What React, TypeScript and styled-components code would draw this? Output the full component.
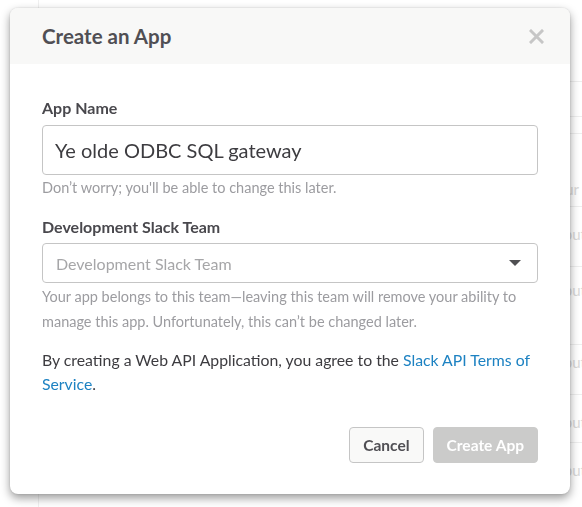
import React from "react";
import styled, { createGlobalStyle } from "styled-components";

const GlobalStyle = createGlobalStyle`
  html, body {
    margin: 0;
    padding: 0;
    background: #ffffff;
    font-family: Lato, "Noto Sans", sans-serif;
    -webkit-font-smoothing: antialiased;
  }
  * { box-sizing: border-box; }
`;

const rows = [
  { height: 82, text: "" },
  { height: 35, text: "" },
  { height: 17, text: "" },
  { height: 73, text: "Your", offset: 548, align: 46 },
  { height: 60, text: "Distribution", offset: 527, align: 18 },
  { height: 78, text: "Distribution", offset: 527, align: 14 },
  { height: 50, text: "Distribution", offset: 527, align: 8 },
  { height: 48, text: "Distribution", offset: 527, align: 18 },
  { height: 70, text: "Distribution", offset: 527, align: 18 },
];

const App = () => {
  return (
    <>
      <GlobalStyle />
      <Page>
        <Table>
          {rows.map((row, i) => (
            <Row key={i} style={{ height: row.height }}>
              {row.text && (
                <RowText style={{ left: (row.offset ?? 0) - 38, top: row.align }}>{row.text}</RowText>
              )}
            </Row>
          ))}
        </Table>
      </Page>

      <Modal>
        <Header>
          <Title>Create an App</Title>
          <Close aria-label="Close">
            <svg width="15" height="15" viewBox="0 0 15 15">
              <path d="M2 2 L13 13 M13 2 L2 13" stroke="#c6c6c6" strokeWidth="3" strokeLinecap="square" />
            </svg>
          </Close>
        </Header>
        <Body>
          <Label>App Name</Label>
          <TextInput defaultValue="Ye olde ODBC SQL gateway" />
          <Hint>Don’t worry; you'll be able to change this later.</Hint>

          <Label $spaced>Development Slack Team</Label>
          <Select>
            <Placeholder>Development Slack Team</Placeholder>
            <Caret />
          </Select>
          <Hint $tall>
            Your app belongs to this team—leaving this team will remove your ability to manage this
            app. Unfortunately, this can’t be changed later.
          </Hint>

          <Terms>
            By creating a Web API Application, you agree to the <Link href="#">Slack API Terms of Service</Link>.
          </Terms>

          <Actions>
            <Button>Cancel</Button>
            <Button $primary disabled>
              Create App
            </Button>
          </Actions>
        </Body>
      </Modal>
    </>
  );
};

const Page = styled.div`
  width: 582px;
  height: 507px;
  overflow: hidden;
  background: #ffffff;
`;

const Table = styled.div`
  margin-left: 38px;
  height: 100%;
  border-left: 1px solid #f0f0f0;
  display: flex;
  flex-direction: column;
`;

const Row = styled.div`
  position: relative;
  flex-shrink: 0;
  border-bottom: 1px solid #eeeeee;
`;

const RowText = styled.span`
  position: absolute;
  font-size: 15px;
  color: #d9d9d9;
  white-space: nowrap;
`;

const Modal = styled.div`
  position: fixed;
  top: 8px;
  left: 10px;
  width: 560px;
  background: #ffffff;
  border-radius: 8px;
  box-shadow: 0 4px 10px rgba(0, 0, 0, 0.4), 0 0 2px rgba(0, 0, 0, 0.15);
  overflow: hidden;
`;

const Header = styled.div`
  height: 56px;
  background: #f8f8f7;
  display: flex;
  align-items: center;
  justify-content: space-between;
  padding: 0 26px 0 32px;
`;

const Title = styled.h1`
  margin: 0;
  font-size: 20.5px;
  font-weight: 700;
  color: #504f54;
`;

const Close = styled.button`
  all: unset;
  display: flex;
  cursor: pointer;
`;

const Body = styled.div`
  display: flex;
  flex-direction: column;
  padding: 34px 32px 31px;
`;

const Label = styled.label<{ $spaced?: boolean }>`
  font-size: 16px;
  line-height: 20px;
  font-weight: 700;
  color: #49484d;
  margin-top: ${props => (props.$spaced ? "19px" : "0")};
  margin-bottom: ${props => (props.$spaced ? "6px" : "7px")};
`;

const TextInput = styled.input`
  height: 50px;
  width: 100%;
  border: 1px solid #c5c5c5;
  border-radius: 4px;
  padding: 0 12px;
  font-family: Lato, sans-serif;
  font-size: 20px;
  color: #3d3c40;
  outline: none;
`;

const Hint = styled.p<{ $tall?: boolean }>`
  margin: ${props => (props.$tall ? "1px 0 0" : "3px 0 0")};
  font-size: 14.5px;
  line-height: ${props => (props.$tall ? "25px" : "20px")};
  color: #9c9ca0;
`;

const Select = styled.div`
  height: 40px;
  border: 1px solid #c5c5c5;
  border-radius: 4px;
  display: flex;
  align-items: center;
  justify-content: space-between;
  padding: 0 16px 0 13px;
  cursor: pointer;
`;

const Placeholder = styled.span`
  font-size: 16px;
  color: #a6a6a8;
`;

const Caret = styled.span`
  width: 0;
  height: 0;
  border-left: 6px solid transparent;
  border-right: 6px solid transparent;
  border-top: 6px solid #505052;
`;

const Terms = styled.p`
  margin: 14px 0 0;
  font-size: 15.8px;
  line-height: 24px;
  color: #3d3c40;
`;

const Link = styled.a`
  color: #1d82c2;
  text-decoration: none;
`;

const Actions = styled.div`
  display: flex;
  justify-content: flex-end;
  gap: 9px;
  margin-top: 31px;
`;

const Button = styled.button<{ $primary?: boolean }>`
  height: 36px;
  padding: 0 13px;
  border-radius: 4px;
  font-family: Lato, sans-serif;
  font-size: 15.5px;
  font-weight: 700;
  cursor: pointer;
  border: 1px solid ${props => (props.$primary ? "#cbcbca" : "#c5c5c5")};
  background: ${props => (props.$primary ? "#cbcbca" : "#f9f9f8")};
  color: ${props => (props.$primary ? "#ffffff" : "#504f54")};
`;

export default App;
